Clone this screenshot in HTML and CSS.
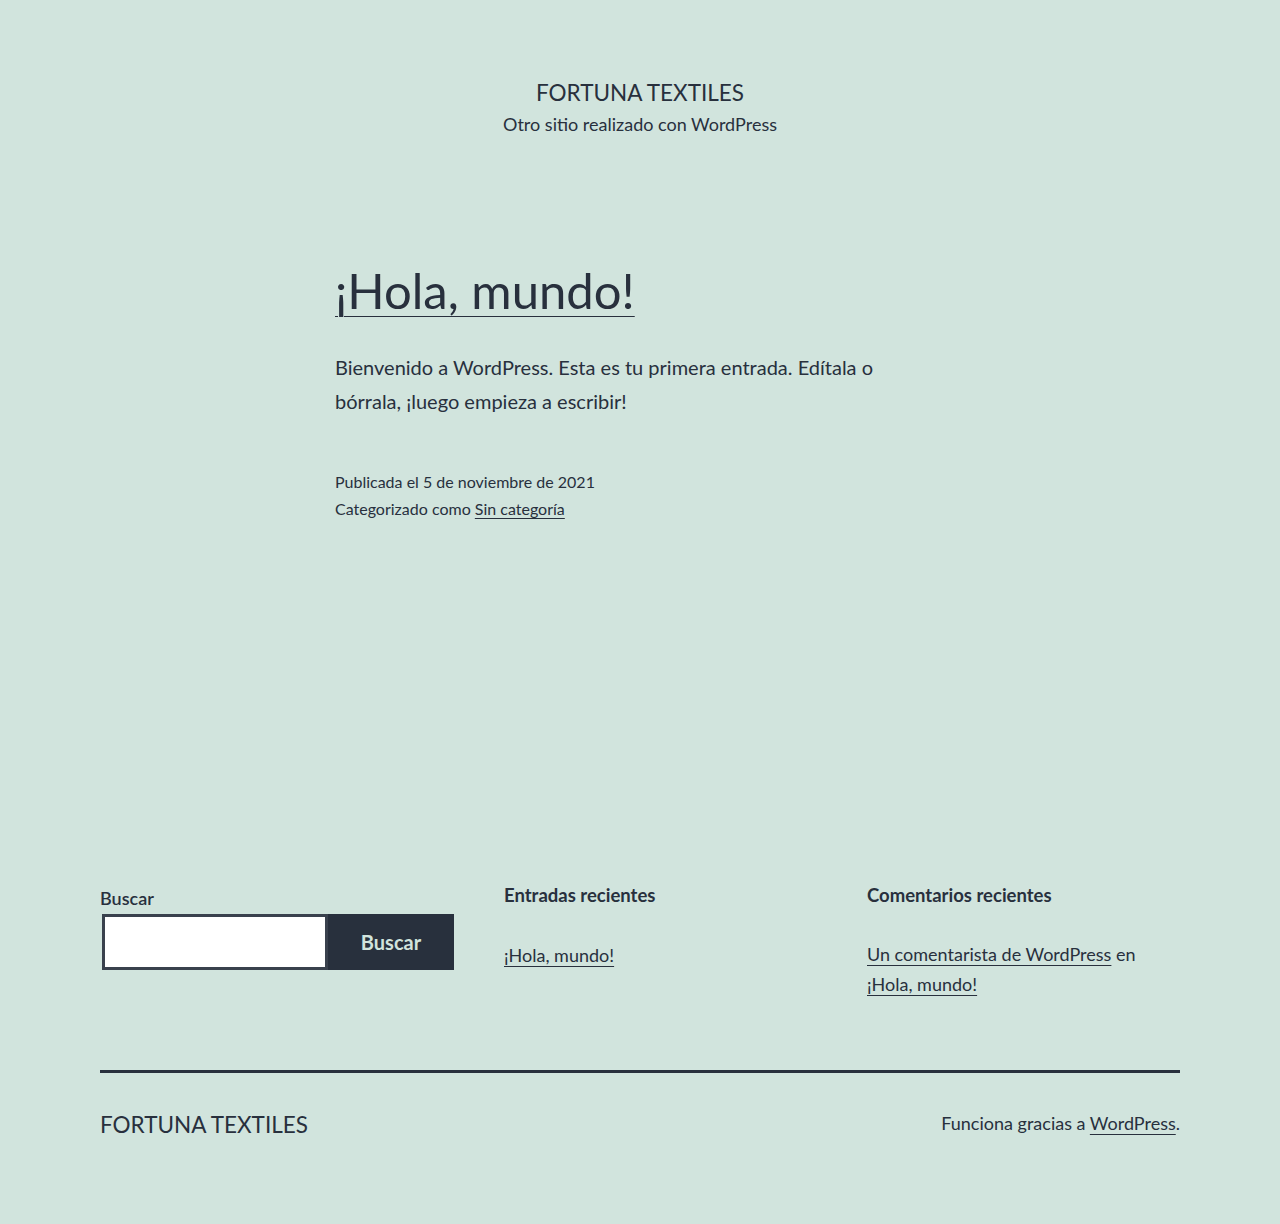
FILE: index.html
```html
<!DOCTYPE html>
<html lang="es">
<head>
<meta charset="utf-8">
<title>FORTUNA TEXTILES</title>
<link rel="stylesheet" href="styles.css">
</head>
<body>
<header class="site-header">
  <p class="site-title">Fortuna Textiles</p>
  <p class="site-description">Otro sitio realizado con WordPress</p>
</header>

<main class="site-main">
  <article class="entry">
    <h2 class="entry-title"><a href="#">¡Hola, mundo!</a></h2>
    <div class="entry-content">
      <p>Bienvenido a WordPress. Esta es tu primera entrada. Edítala o bórrala, ¡luego empieza a escribir!</p>
    </div>
    <footer class="entry-footer">
      <div>Publicada el 5 de noviembre de 2021</div>
      <div>Categorizado como <a href="#">Sin categoría</a></div>
    </footer>
  </article>
</main>

<aside class="widget-area">
  <section class="widget widget-search">
    <form class="search-form">
      <label class="search-label" for="s">Buscar</label>
      <div class="search-row">
        <input class="search-input" id="s" type="search">
        <button class="search-button" type="button">Buscar</button>
      </div>
    </form>
  </section>
  <section class="widget">
    <h2 class="widget-title">Entradas recientes</h2>
    <ul class="widget-list">
      <li><a href="#">¡Hola, mundo!</a></li>
    </ul>
  </section>
  <section class="widget">
    <h2 class="widget-title">Comentarios recientes</h2>
    <ul class="widget-list widget-comments">
      <li><a href="#">Un comentarista de WordPress</a> en <a href="#">¡Hola, mundo!</a></li>
    </ul>
  </section>
</aside>

<footer class="site-footer">
  <div class="footer-name">Fortuna Textiles</div>
  <div class="powered">Funciona gracias a <a href="#">WordPress</a>.</div>
</footer>
</body>
</html>
```
FILE: styles.css
```css
html, body {
  margin: 0;
  padding: 0;
}
body {
  background: #d1e4dd;
  color: #28303d;
  font-family: Lato, "Liberation Sans", sans-serif;
  font-size: 20px;
  line-height: 1.7;
}
a {
  color: inherit;
  text-decoration: underline;
  text-decoration-thickness: 1px;
  text-underline-offset: 4px;
}

/* Header */
.site-header {
  padding-top: 75px;
  text-align: center;
}
.site-title {
  margin: 1px 0 0;
  font-size: 22.5px;
  line-height: 33.6px;
  text-transform: uppercase;
}
.site-description {
  margin: 2px 0 0;
  font-size: 18px;
  line-height: 1.4;
}

/* Main */
.site-main {
  width: 610px;
  margin: 0 auto;
}
.entry-title {
  margin: 122.5px 0 0;
  font-size: 49px;
  font-weight: 400;
  line-height: 62.4px;
}
.entry-title a {
  text-underline-offset: 7px;
}
.entry-content p {
  max-width: 600px;
  margin: 28.5px 0 0;
  font-size: 20px;
  line-height: 34px;
}
.entry-footer {
  margin-top: 50px;
  font-size: 16px;
  line-height: 1.7;
}
.entry-footer a {
  text-underline-offset: 3px;
}

/* Widgets */
.widget-area {
  width: 1080px;
  margin: 364px auto 0;
  display: grid;
  grid-template-columns: 354px 1fr 1fr;
  column-gap: 50px;
  align-items: start;
}
.search-label {
  display: block;
  font-size: 18px;
  font-weight: 600;
  line-height: 1.3;
  margin-bottom: 4px;
}
.search-row {
  display: flex;
  margin-left: 2px;
}
.search-input {
  box-sizing: border-box;
  width: 226px;
  height: 56px;
  margin: 0;
  border: 3px solid #39414d;
  border-radius: 0;
  background: #fff;
  font: inherit;
}
.search-button {
  box-sizing: border-box;
  width: 126px;
  height: 56px;
  margin: 0;
  border: 0;
  border-radius: 0;
  background: #28303d;
  color: #d1e4dd;
  font-family: Lato, "Liberation Sans", sans-serif;
  font-size: 20px;
  font-weight: 700;
  line-height: 1;
}
.widget-title {
  margin: -2px 0 0;
  font-size: 18.5px;
  font-weight: 700;
  line-height: 21px;
}
.widget-list {
  list-style: none;
  margin: 34px 0 0;
  padding: 0;
  font-size: 18px;
  line-height: 1.7;
}
.widget-comments {
  margin-top: 33px;
}

/* Footer */
.site-footer {
  width: 1080px;
  margin: 70px auto 0;
  border-top: 3px solid #28303d;
  padding: 34px 0 60px;
  display: flex;
  justify-content: space-between;
  align-items: flex-start;
}
.footer-name {
  font-size: 22.5px;
  line-height: 33.6px;
  margin-top: 1px;
  text-transform: uppercase;
}
.powered {
  font-size: 18px;
  line-height: 1.7;
  margin-top: 1px;
}
.powered a {
  text-underline-offset: 4px;
}
```
